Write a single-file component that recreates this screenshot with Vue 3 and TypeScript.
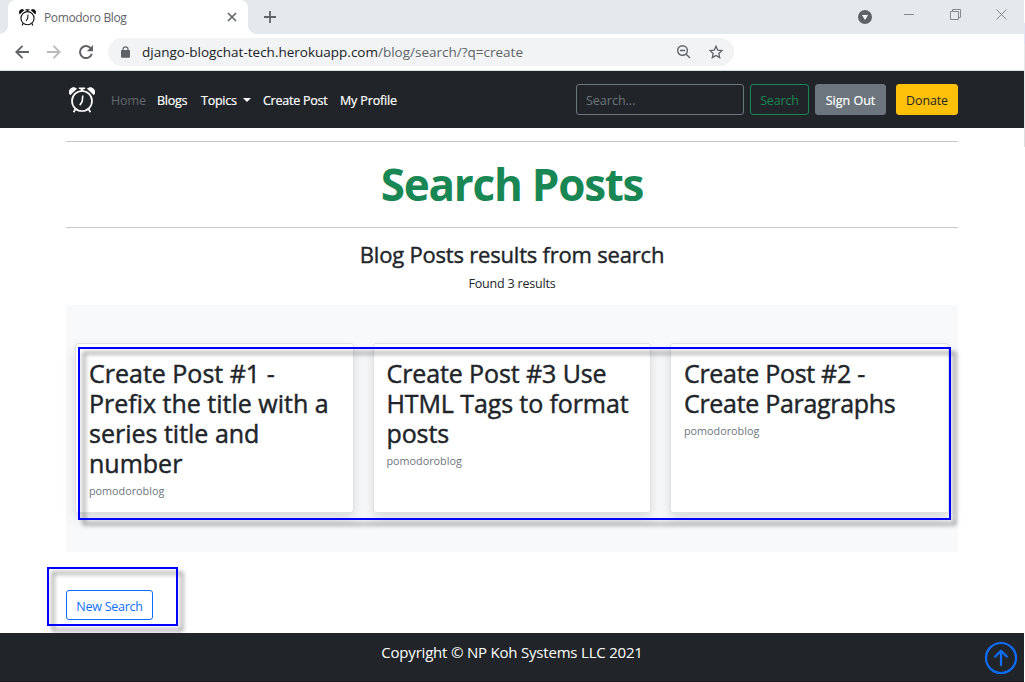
<script setup lang="ts">
interface Post {
  title: string[]
  author: string
}

interface NavLink {
  label: string
  cls: string
}

const links: NavLink[] = [
  { label: 'Home', cls: 'home' },
  { label: 'Blogs', cls: 'blogs' },
  { label: 'Topics', cls: 'topics' },
  { label: 'Create Post', cls: 'create' },
  { label: 'My Profile', cls: 'profile' },
]

const posts: Post[] = [
  { title: ['Create Post #1 -', 'Prefix the title with a', 'series title and', 'number'], author: 'pomodoroblog' },
  { title: ['Create Post #3 Use', 'HTML Tags to format', 'posts'], author: 'pomodoroblog' },
  { title: ['Create Post #2 -', 'Create Paragraphs'], author: 'pomodoroblog' },
]
</script>

<template>
  <div class="window">
    <svg width="0" height="0" class="defs">
      <symbol id="clock" viewBox="0 0 26 26">
        <circle cx="13" cy="14" r="10" fill="none" stroke="currentColor" stroke-width="1.7" />
        <path d="M13.8 8.5L13.2 14.5L10.8 18.3" fill="none" stroke="currentColor" stroke-width="1.6" />
        <path d="M1.2 7.8A4.4 4.4 0 0 1 7.6 1.8ZM24.8 7.8A4.4 4.4 0 0 0 18.4 1.8Z" fill="currentColor" stroke="currentColor" stroke-width=".8" stroke-linejoin="round" />
        <path d="M9.8 0.4H16.2V2H14.4V4H11.6V2H9.8Z" fill="currentColor" />
        <path d="M6.5 22L4.6 25.2M19.5 22L21.4 25.2" stroke="currentColor" stroke-width="1.7" />
      </symbol>
    </svg>

    <div class="tabstrip">
      <div class="tab">
        <svg class="favicon" width="17" height="17"><use href="#clock" /></svg>
        <span class="tab-title">Pomodoro Blog</span>
        <svg class="tab-close" width="10" height="10" viewBox="0 0 10 10"><path d="M1 1L9 9M9 1L1 9" stroke="#5f6368" stroke-width="1.6" /></svg>
      </div>
      <svg class="plus" width="12" height="12" viewBox="0 0 12 12"><path d="M6 0V12M0 6H12" stroke="#5f6368" stroke-width="1.8" /></svg>
      <div class="controls">
        <svg width="14" height="14" viewBox="0 0 14 14" class="drop"><circle cx="7" cy="7" r="7" fill="#5f6368" /><path d="M4 5H10L7 10Z" fill="#fff" /></svg>
        <svg width="10" height="11" viewBox="0 0 10 11" class="min"><path d="M0 6.5H10" stroke="#878a8d" /></svg>
        <svg width="11" height="11" viewBox="0 0 11 11" class="max"><path d="M.5 2.5H8.5V10.5H.5ZM2.5 2.5V.5H10.5V8.5H8.5" fill="none" stroke="#878a8d" /></svg>
        <svg width="11" height="11" viewBox="0 0 11 11" class="close"><path d="M.5 .5L10.5 10.5M10.5 .5L.5 10.5" stroke="#878a8d" /></svg>
      </div>
    </div>

    <div class="toolbar">
      <svg width="14" height="14" viewBox="0 0 14 14" class="back"><path d="M14 7H1.5M7.5 .8L1.3 7L7.5 13.2" fill="none" stroke="#5f6368" stroke-width="1.9" /></svg>
      <svg width="14" height="14" viewBox="0 0 14 14" class="fwd"><path d="M0 7H12.5M6.5 .8L12.7 7L6.5 13.2" fill="none" stroke="#bababc" stroke-width="1.9" /></svg>
      <svg width="14" height="14" viewBox="0 0 14 14" class="reload"><path d="M12 3.7A6 6 0 1 0 12.8 8.7" fill="none" stroke="#5f6368" stroke-width="2" /><path d="M14 0V6.2H7.8Z" fill="#5f6368" /></svg>
      <div class="omnibox">
        <svg width="9" height="12" viewBox="0 0 9 12" class="lock"><rect x="0" y="4" width="9" height="7.7" rx="1" fill="#5f6368" /><path d="M2 4.5V3.1A2.5 2.3 0 0 1 7 3.1V4.5" fill="none" stroke="#5f6368" stroke-width="1.2" /></svg>
        <span class="url"><span class="host">django-blogchat-tech.herokuapp.com</span><span class="path">/blog/search/?q=create</span></span>
        <svg width="14" height="14" viewBox="0 0 14 14" class="zoom"><circle cx="5.5" cy="5.5" r="4.8" fill="none" stroke="#5f6368" stroke-width="1.4" /><path d="M3 5.5H8M9 9L13 13" stroke="#5f6368" stroke-width="1.4" /></svg>
        <svg width="14" height="14" viewBox="0 0 14 14" class="star"><path d="M7 1.2L8.7 5.2L13 5.6L9.8 8.4L10.7 12.6L7 10.4L3.3 12.6L4.2 8.4L1 5.6L5.3 5.2Z" fill="none" stroke="#5f6368" stroke-width="1.3" /></svg>
      </div>
    </div>

    <header class="navbar">
      <svg class="logo" width="26" height="26"><use href="#clock" /></svg>
      <nav class="links">
        <a v-for="l in links" :key="l.label" :class="['link', l.cls]">{{ l.label }}</a>
      </nav>
      <div class="search-input"><span>Search...</span></div>
      <button class="btn search-btn"><span>Search</span></button>
      <button class="btn signout"><span>Sign Out</span></button>
      <button class="btn donate"><span>Donate</span></button>
    </header>

    <main class="content">
      <h1><span>Search Posts</span></h1>
      <h2><span>Blog Posts results from search</span></h2>
      <p class="found"><span>Found 3 results</span></p>
      <section class="results">
        <article v-for="(p, i) in posts" :key="i" class="card">
          <h3>{{ p.title.join('\n') }}</h3>
          <div class="author">{{ p.author }}</div>
        </article>
        <div class="mark mark-results"></div>
      </section>
      <div class="actions">
        <button class="btn new-search"><span>New Search</span></button>
        <div class="mark mark-action"></div>
      </div>
    </main>

    <footer class="footer">
      <span class="copy">Copyright © NP Koh Systems LLC 2021</span>
      <svg class="to-top" width="34" height="34" viewBox="0 0 34 34"><circle cx="17" cy="17" r="15" fill="none" stroke="#0d6efd" stroke-width="2.2" /><path d="M17 25V10M10.5 16.2L17 9.7L23.5 16.2" fill="none" stroke="#0d6efd" stroke-width="2.2" /></svg>
    </footer>
    <div class="edge"></div>
  </div>
</template>

<style>
body { margin: 0; background: #fff; overflow: hidden; }
</style>

<style scoped>
* { box-sizing: border-box; }
.window { position: relative; width: 1025px; height: 682px; overflow: hidden; background: #fff; display: flex; flex-direction: column; font-family: "Open Sans", "Noto Sans", sans-serif; font-size: 12.5px; color: #212529; }
.defs { position: absolute; }
svg { display: block; flex: none; }
span, a { white-space: nowrap; }

.tabstrip { flex: none; width: 1024px; height: 34px; background: #e6e9ec; display: flex; align-items: flex-start; padding-left: 8px; }
.tab { position: relative; width: 240px; height: 34px; background: #fff; border-radius: 8px 8px 0 0; display: flex; align-items: center; padding: 0 11px 0 11px; color: #5f6368; }
.tab::before, .tab::after { content: ""; position: absolute; bottom: 0; width: 8px; height: 8px; }
.tab::before { left: -8px; background: radial-gradient(circle at 0 0, #e6e9ec 7.5px, #fff 8px); }
.tab::after { right: -8px; background: radial-gradient(circle at 100% 0, #e6e9ec 7.5px, #fff 8px); }
.favicon { color: #111; }
.tab-title { margin-left: 8px; font-size: 12px; letter-spacing: -0.35px; }
.tab-close { margin-left: auto; margin-right: 0; }
.plus { margin: 11px 0 0 16px; }
.controls { margin-left: auto; display: flex; padding-right: 17px; }
.drop { margin: 10px 32px 0 0; }
.min { margin: 8px 36px 0 0; }
.max { margin: 9px 35px 0 0; }
.close { margin-top: 9px; }

.toolbar { flex: none; height: 37px; border-bottom: 1px solid #d9dddc; display: flex; align-items: center; padding-left: 15px; }
.fwd { margin-left: 18px; }
.reload { margin-left: 18px; }
.omnibox { margin-left: 15px; width: 626px; height: 28px; border-radius: 14px; background: #f1f3f4; display: flex; align-items: center; padding: 0 11px 0 13px; }
.url { margin-left: 12px; font-size: 13.5px; color: #5f6368; }
.host { color: #202124; }
.zoom { margin-left: auto; }
.star { margin-left: 18px; margin-right: 0; }

.navbar { flex: none; width: 1024px; height: 57px; background: #212529; display: flex; align-items: center; padding: 0 66px 0 69px; color: #fff; }
.links { display: flex; margin-left: 15px; width: 466px; padding: 2px 0 0 1px; }
.link { line-height: 20px; letter-spacing: -0.25px; -webkit-text-stroke: .2px; }
.home { width: 46px; color: #62686d; letter-spacing: -0.1px; -webkit-text-stroke: 0; }
.blogs { width: 44px; }
.topics { width: 62px; }
.topics::after { content: ""; display: inline-block; border: 4px solid transparent; border-top-color: #fff; border-bottom: 0; margin-left: 6px; vertical-align: 3px; }
.create { width: 77px; }
.profile { letter-spacing: -0.15px; }
.btn { font: inherit; height: 31px; border: 1px solid; border-radius: 3px; padding: 1px 0 0; display: flex; align-items: center; justify-content: center; background: none; letter-spacing: -0.15px; }
.search-input { width: 168px; height: 31px; border: 1px solid #6c757d; border-radius: 3px; color: #6c757d; display: flex; align-items: center; padding: 1px 0 0 9px; }
.search-btn { width: 59px; margin-left: 6px; border-color: #198754; color: #198754; }
.signout { width: 71px; margin-left: 6px; background: #6c757d; border-color: #6c757d; color: #fff; letter-spacing: 0; -webkit-text-stroke: .2px; }
.donate { width: 62px; margin-left: 10px; background: #ffc107; border-color: #ffc107; color: #212529; }

.content { flex: none; width: 892px; height: 505px; margin-left: 66px; padding-top: 13px; display: flex; flex-direction: column; }
h1 { margin: 0; height: 87px; border-top: 1px solid #c8c9ca; border-bottom: 1px solid #c8c9ca; color: #198754; font-size: 44px; line-height: 84px; font-weight: 700; letter-spacing: -1.25px; text-align: center; }
h2 { margin: 11px 0 0; font-size: 22px; line-height: 30px; font-weight: 500; letter-spacing: -.2px; -webkit-text-stroke: .4px; text-align: center; }
.found { margin: 5px 0 0; line-height: 20px; font-size: 12.5px; letter-spacing: -.2px; text-align: center; }
.results { position: relative; margin-top: 11px; height: 247px; background: #f8f9fa; display: flex; align-items: flex-start; gap: 19px; padding: 38px 9px 0 9.3px; }
.card { width: 278.5px; height: 170px; background: #fff; border: 1px solid #dfe0e1; border-radius: 3px; box-shadow: 0 6px 13px rgba(0, 0, 0, .13); padding: 14px 12.7px; }
h3 { margin: 0; font-size: 25px; line-height: 30px; font-weight: 500; letter-spacing: -.1px; white-space: pre; -webkit-text-stroke: .45px; }
.card:nth-child(1) h3 { letter-spacing: 0; }
.card:nth-child(3) h3 { letter-spacing: -.3px; }
.author { margin-top: 5px; font-size: 10.8px; line-height: 16px; color: #6c757d; }
.mark { position: absolute; border: 2px solid #0000ff; pointer-events: none; filter: drop-shadow(5px 5px 2px rgba(0, 0, 0, .5)); }
.mark-results { left: 12px; top: 42px; width: 873px; height: 173px; }
.actions { position: relative; margin-top: 38px; }
.new-search { width: 87px; height: 30px; border-color: #0d6efd; color: #0d6efd; padding-top: 2px; letter-spacing: -.25px; }
.mark-action { left: -19px; top: -23px; width: 131px; height: 59px; }

.footer { position: relative; flex: none; width: 1024px; height: 49px; background: #212529; border-bottom: 1px solid #1a141c; color: #fff; display: flex; justify-content: center; }
.copy { line-height: 38px; font-size: 15px; letter-spacing: -.2px; }
.to-top { position: absolute; right: 6px; top: 8px; }
.edge { position: absolute; right: 0; top: 23px; width: 1px; height: 124px; background: linear-gradient(#dfe7f7 20px, #e9eaeb 21px, #dcddde); }
</style>
